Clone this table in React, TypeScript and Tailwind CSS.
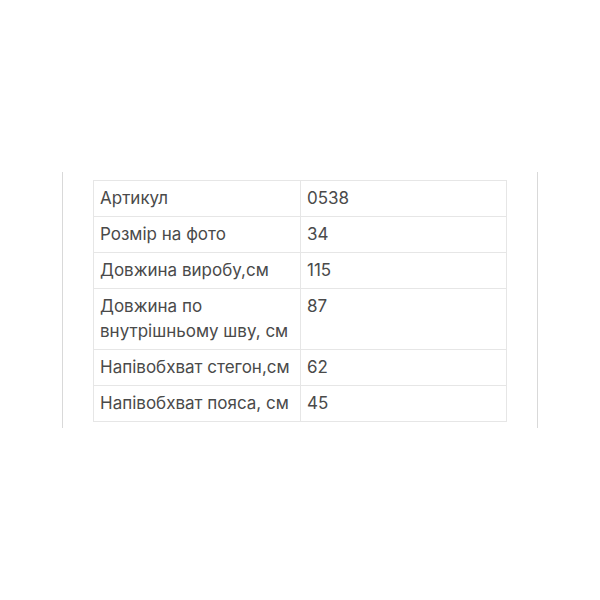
import React from "react";

const rows: [string, string][] = [
  ["Артикул", "0538"],
  ["Розмір на фото", "34"],
  ["Довжина виробу,см", "115"],
  ["Довжина по внутрішньому шву, см", "87"],
  ["Напівобхват стегон,см", "62"],
  ["Напівобхват пояса, см", "45"],
];

export default function App() {
  return (
    <div
      className="w-[600px] h-[600px] bg-white flex justify-center pt-[172px]"
      style={{ fontFamily: "Inter, 'Noto Sans', sans-serif" }}
    >
      <div className="w-[476px] h-[256px] border-x border-[#d9d9d9] pt-[8px] px-[30px]">
        <table className="w-[414px] border-collapse text-[17px] text-[#4a4a4a]">
          <tbody>
            {rows.map(([label, value], i) => (
              <tr key={i}>
                <td className="w-[207px] border border-[#e6e6e6] align-top px-[6px] py-[5px] leading-[25px]">
                  {label}
                </td>
                <td className="border border-[#e6e6e6] align-top px-[6px] py-[5px] leading-[25px]">
                  {value}
                </td>
              </tr>
            ))}
          </tbody>
        </table>
      </div>
    </div>
  );
}
